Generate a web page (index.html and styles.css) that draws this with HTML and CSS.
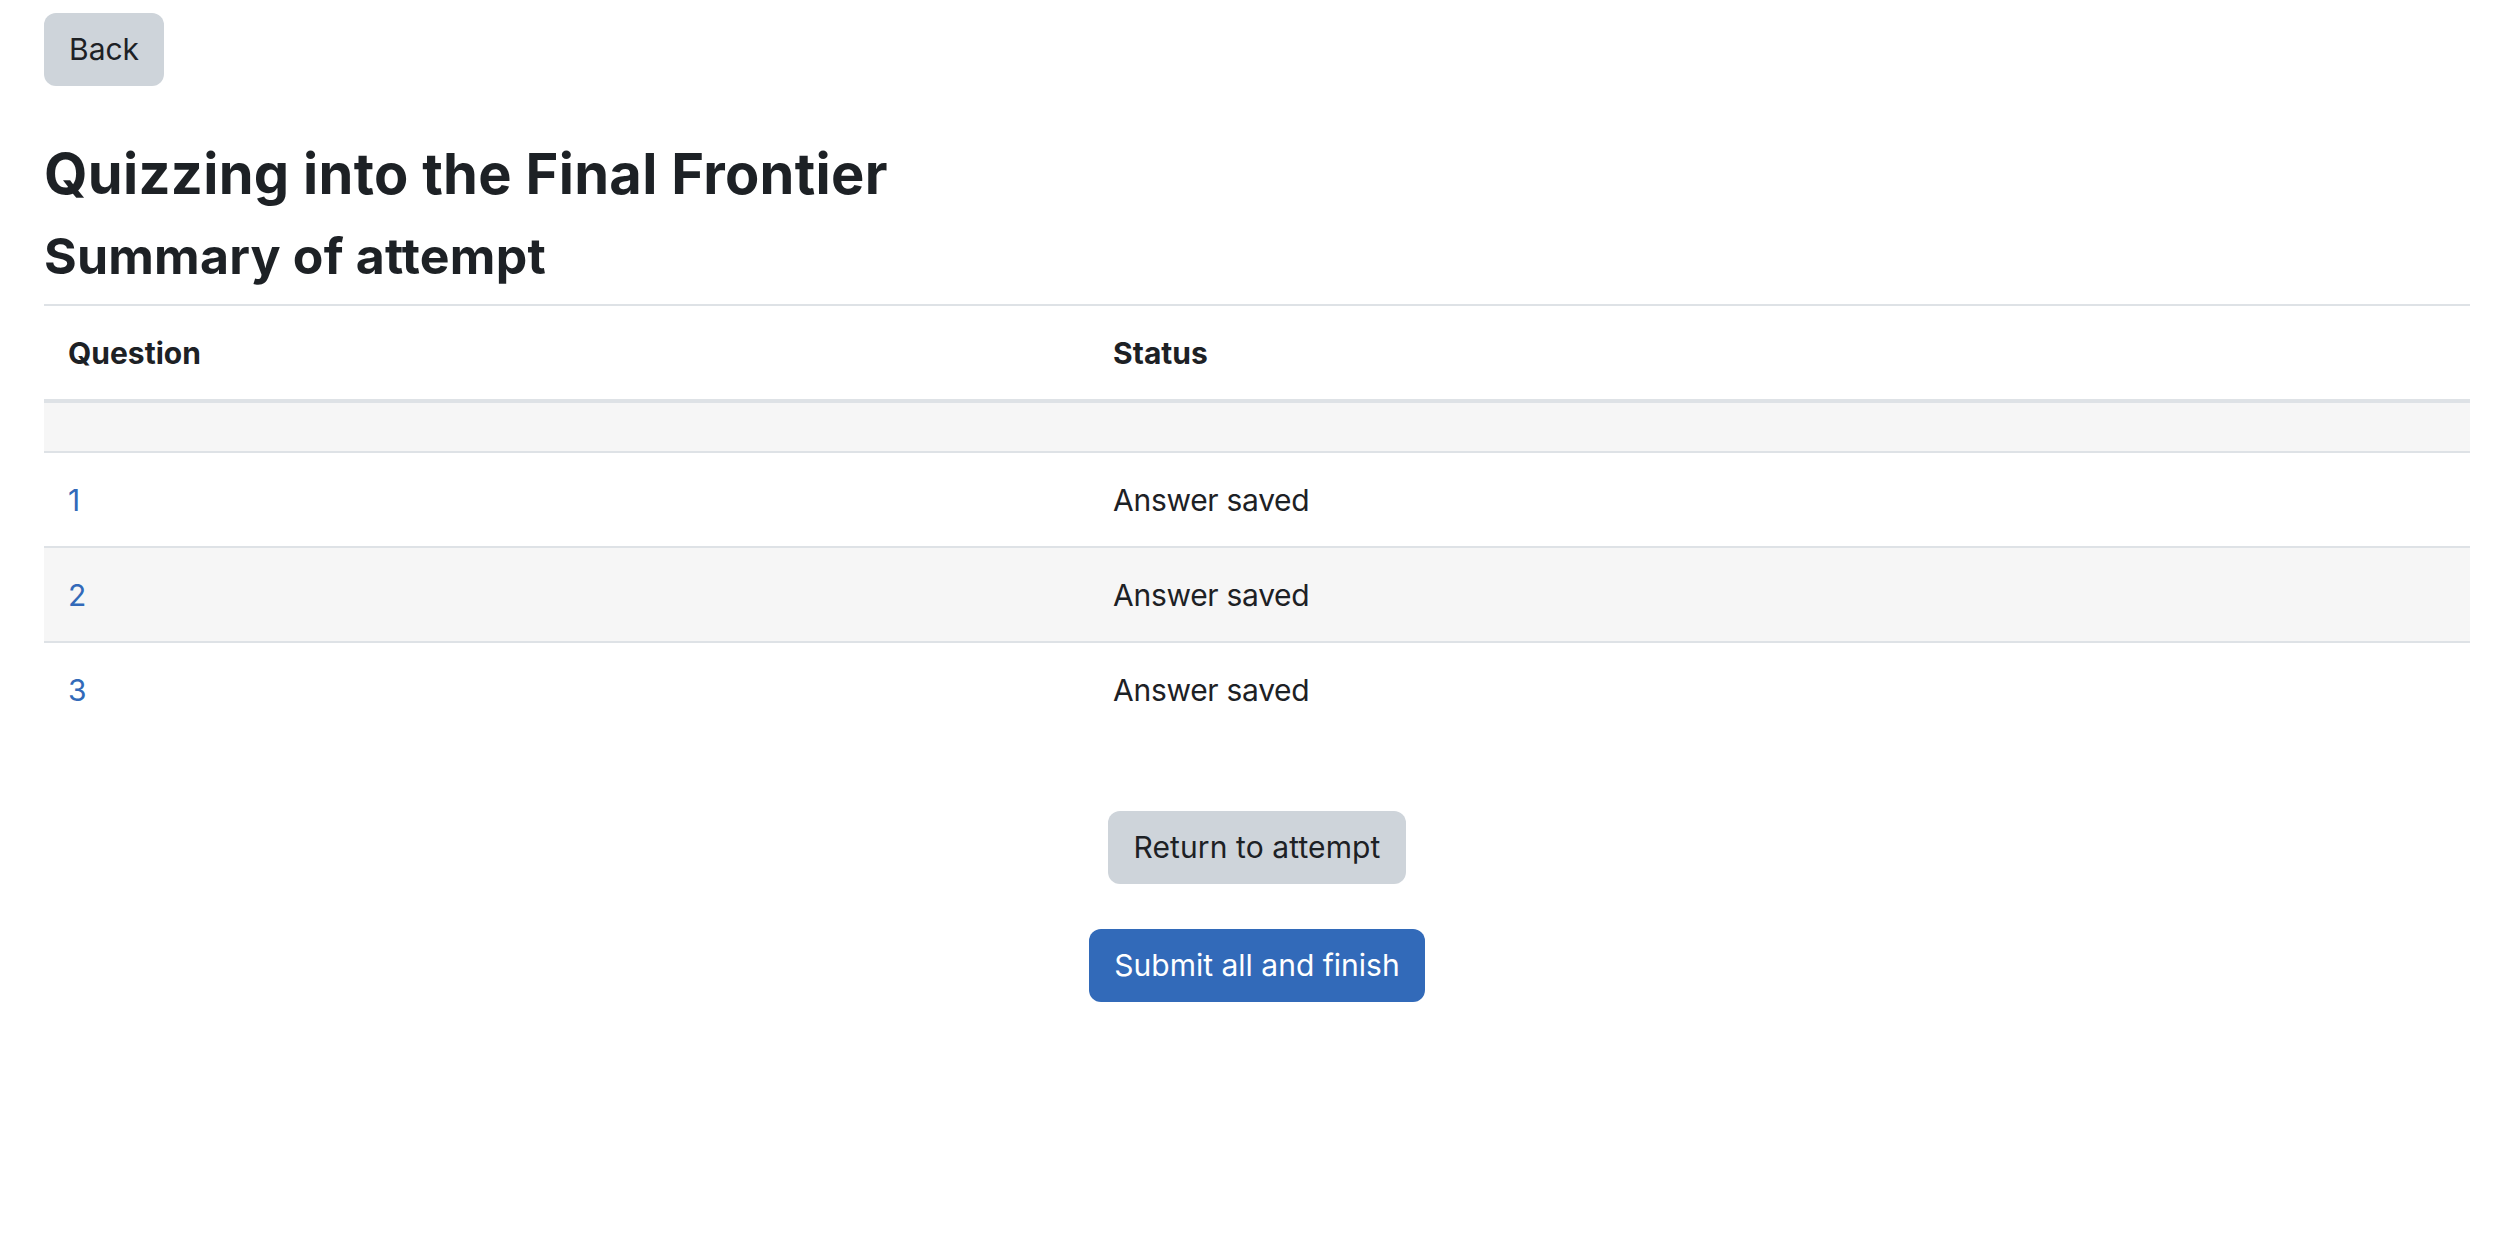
FILE: index.html
```html
<!DOCTYPE html>
<html lang="en">
<head>
<meta charset="utf-8">
<title>Quizzing into the Final Frontier: Summary of attempt</title>
<link rel="stylesheet" href="styles.css">
</head>
<body>
<div class="page">
  <div class="back-row">
    <a class="btn btn-secondary" href="#">Back</a>
  </div>
  <h2 class="quiz-title">Quizzing into the Final Frontier</h2>
  <h3 class="summary-title">Summary of attempt</h3>
  <table class="summary-table">
    <thead>
      <tr>
        <th class="col-question">Question</th>
        <th class="col-status">Status</th>
      </tr>
    </thead>
    <tbody>
      <tr class="empty-row"><td></td><td></td></tr>
      <tr><td><a href="#">1</a></td><td>Answer saved</td></tr>
      <tr><td><a href="#">2</a></td><td>Answer saved</td></tr>
      <tr><td><a href="#">3</a></td><td>Answer saved</td></tr>
    </tbody>
  </table>
  <div class="submit-buttons">
    <a class="btn btn-secondary btn-return" href="#">Return to attempt</a>
    <a class="btn btn-primary" href="#">Submit all and finish</a>
  </div>
</div>
</body>
</html>
```
FILE: styles.css
```css
html, body {
  margin: 0;
  padding: 0;
  background: #ffffff;
}

body {
  font-family: Inter, "Noto Sans", "Liberation Sans", sans-serif;
  font-size: 30px;
  line-height: 45px;
  color: #1d2125;
}

.page {
  padding: 13px 44px 0 44px;
}

.back-row {
  display: flex;
}

.btn {
  display: inline-block;
  font-size: 30px;
  line-height: 45px;
  padding: 13px 24px 13px 24px;
  border: 1px solid transparent;
  border-radius: 12px;
  text-decoration: none;
  white-space: nowrap;
}

.btn-return {
  padding-left: 25px;
  padding-right: 25px;
  letter-spacing: 0.1px;
}

.btn-secondary {
  background: #ced4da;
  color: #1d2125;
}

.btn-primary {
  background: #326ab9;
  color: #ffffff;
}

.quiz-title {
  margin: 55px 0 0 0;
  font-size: 56px;
  line-height: 67px;
  font-weight: 700;
  letter-spacing: 0.3px;
}

.summary-title {
  margin: 18px 0 0 0;
  font-size: 50px;
  line-height: 60px;
  font-weight: 700;
  letter-spacing: 0.2px;
}

.summary-table {
  width: 100%;
  margin-top: 18px;
  border-collapse: collapse;
}

.summary-table th,
.summary-table td {
  text-align: left;
  padding: 25px 24px 23px 24px;
  line-height: 45px;
  vertical-align: top;
  border-top: 2px solid #dee2e6;
}

.summary-table td {
  letter-spacing: -0.3px;
}

.summary-table th {
  font-weight: 700;
  border-bottom: 4px solid #dee2e6;
}

.col-question {
  width: 43.08%;
}

.summary-table tbody tr:nth-child(odd) td {
  background: #f6f6f6;
}

.summary-table .empty-row td {
  border-top: none;
  height: 0;
  padding: 24px;
  line-height: 0;
}

.summary-table a {
  color: #326ab9;
  text-decoration: none;
}

.submit-buttons {
  display: flex;
  flex-direction: column;
  align-items: center;
  gap: 45px;
  margin-top: 75px;
}
```
